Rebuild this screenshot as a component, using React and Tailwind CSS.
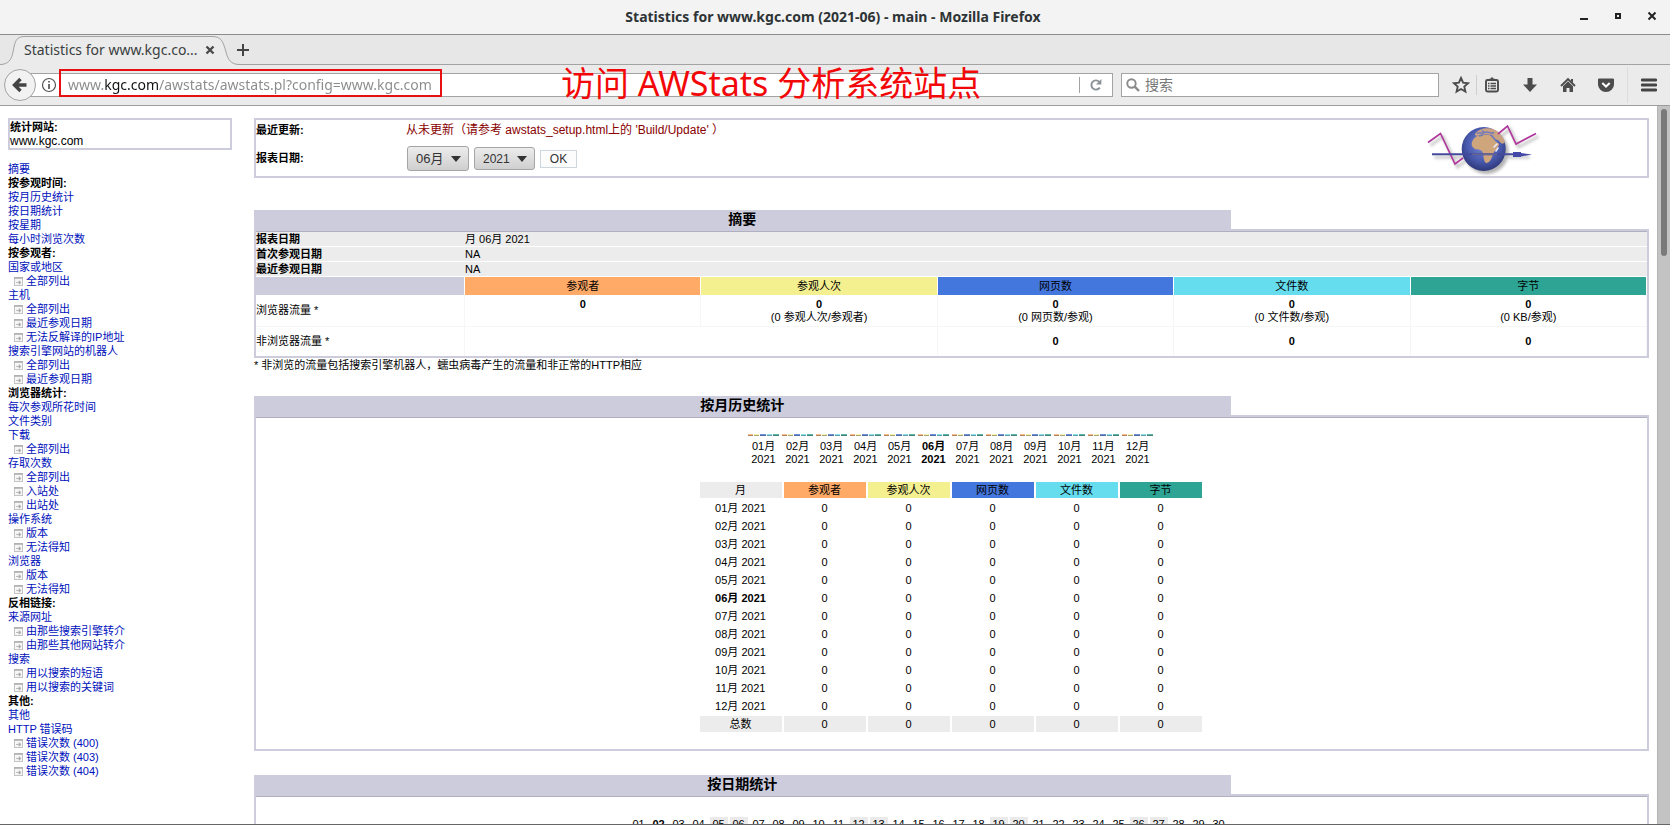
import React from "react";

const METRICS = [
  { name: "参观者", bg: "bg-[#ffaa66]", ratio: null },
  { name: "参观人次", bg: "bg-[#f4f090]", ratio: "(0 参观人次/参观者)" },
  { name: "网页数", bg: "bg-[#4477dd]", ratio: "(0 网页数/参观)" },
  { name: "文件数", bg: "bg-[#66ddee]", ratio: "(0 文件数/参观)" },
  { name: "字节", bg: "bg-[#2ea495]", ratio: "(0 KB/参观)" },
];

const MONTHS = ["01", "02", "03", "04", "05", "06", "07", "08", "09", "10", "11", "12"];
const DAYS = Array.from({ length: 30 }, (_, i) => i + 1);
const WEEKEND = [5, 6, 12, 13, 19, 20, 26, 27];

const MENU = [
  ["link", "摘要"],
  ["head", "按参观时间:"],
  ["link", "按月历史统计"],
  ["link", "按日期统计"],
  ["link", "按星期"],
  ["link", "每小时浏览次数"],
  ["head", "按参观者:"],
  ["link", "国家或地区"],
  ["sub", "全部列出"],
  ["link", "主机"],
  ["sub", "全部列出"],
  ["sub", "最近参观日期"],
  ["sub", "无法反解译的IP地址"],
  ["link", "搜索引擎网站的机器人"],
  ["sub", "全部列出"],
  ["sub", "最近参观日期"],
  ["head", "浏览器统计:"],
  ["link", "每次参观所花时间"],
  ["link", "文件类别"],
  ["link", "下载"],
  ["sub", "全部列出"],
  ["link", "存取次数"],
  ["sub", "全部列出"],
  ["sub", "入站处"],
  ["sub", "出站处"],
  ["link", "操作系统"],
  ["sub", "版本"],
  ["sub", "无法得知"],
  ["link", "浏览器"],
  ["sub", "版本"],
  ["sub", "无法得知"],
  ["head", "反相链接:"],
  ["link", "来源网址"],
  ["sub", "由那些搜索引擎转介"],
  ["sub", "由那些其他网站转介"],
  ["link", "搜索"],
  ["sub", "用以搜索的短语"],
  ["sub", "用以搜索的关键词"],
  ["head", "其他:"],
  ["link", "其他"],
  ["link", "HTTP 错误码"],
  ["sub", "错误次数 (400)"],
  ["sub", "错误次数 (403)"],
  ["sub", "错误次数 (404)"],
];

function TitleBar() {
  return (
    <header className="flex h-[35px] shrink-0 items-center border-b border-[#8c8c88] bg-[#f3f3f3] text-[#2e3436]">
      <div className="w-[100px]" />
      <h1 className="flex-1 text-center font-['Noto_Sans','Noto_Sans_CJK_SC',sans-serif] text-[14px] leading-8 font-bold">
        Statistics for www.kgc.com (2021-06) - main - Mozilla Firefox
      </h1>
      <div className="flex w-[104px] shrink-0 items-center justify-end pr-px pb-0.5">
        <button aria-label="最小化" className="flex w-[34px] justify-center">
          <svg width="10" height="10" viewBox="0 0 10 10"><path d="M1 8h8" stroke="#222" strokeWidth="2" /></svg>
        </button>
        <button aria-label="最大化" className="flex w-[34px] justify-center">
          <svg width="10" height="10" viewBox="0 0 10 10"><rect x="3" y="3" width="4" height="4" fill="none" stroke="#222" strokeWidth="2" /></svg>
        </button>
        <button aria-label="关闭" className="flex w-[34px] justify-center">
          <svg width="10" height="10" viewBox="0 0 10 10"><path d="M1.500 1.500l7 7M8.500 1.500l-7 7" stroke="#222" strokeWidth="2" /></svg>
        </button>
      </div>
    </header>
  );
}

function TabStrip() {
  return (
    <div className="relative flex h-[30px] shrink-0 items-center border-b border-[#a3a3a3] bg-[#e7e7e7] font-['Noto_Sans','Noto_Sans_CJK_SC',sans-serif] text-[#3a3f41]">
      <svg className="absolute top-0 left-0" width="240" height="30" viewBox="0 0 240 30">
        <path
          d="M0 30V29.500C8 29.500 11.500 25 13 17C15 6 16 1.500 25 1.500H212C221 1.500 223 6 226 17C228 25 231 29.500 238 29.500V30Z"
          fill="#ebebeb"
        />
        <path
          d="M0 29.500C8 29.500 11.500 25 13 17C15 6 16 1.500 25 1.500H212C221 1.500 223 6 226 17C228 25 231 29.500 240 29.500"
          fill="none"
          stroke="#a3a3a3"
        />
      </svg>
      <div className="relative flex items-center pl-6">
        <span className="w-[180px] text-[14px] leading-6 whitespace-nowrap">Statistics for www.kgc.co...</span>
        <button aria-label="关闭标签页">
          <svg width="12" height="12" viewBox="0 0 12 12"><path d="M2.500 2.500l7 7M9.500 2.500l-7 7" stroke="#4a4a4a" strokeWidth="2.400" /></svg>
        </button>
        <button aria-label="新建标签页" className="ml-5">
          <svg width="14" height="14" viewBox="0 0 14 14"><path d="M7 1v12M1 7h12" stroke="#444" strokeWidth="2" /></svg>
        </button>
      </div>
    </div>
  );
}

function Toolbar() {
  return (
    <div className="flex h-[41px] shrink-0 items-center border-b border-[#a09c9e] bg-[#ebebeb] pl-1 font-['Noto_Sans','Noto_Sans_CJK_SC',sans-serif]">
      <button aria-label="后退" className="z-10 flex size-8 shrink-0 items-center justify-center rounded-full border border-[#a3a3a3] bg-[#f2f2f2]">
        <svg width="16" height="16" viewBox="0 0 16 16"><path d="M8.500 2L2.500 8l6 6M3 8h11.500" fill="none" stroke="#444" strokeWidth="3.400" /></svg>
      </button>
      <div className="-ml-2 flex h-6 min-w-0 flex-1 items-center border border-[#a3a3a3] bg-white pl-3">
        <svg className="shrink-0" width="16" height="16" viewBox="0 0 16 16">
          <circle cx="8" cy="8" r="6.500" fill="none" stroke="#555" strokeWidth="1.200" />
          <path d="M8 7v5M8 4v1.600" stroke="#555" strokeWidth="1.700" />
        </svg>
        <input
          aria-label="地址"
          defaultValue="www.kgc.com/awstats/awstats.pl?config=www.kgc.com"
          className="ml-[11px] h-[22px] min-w-0 flex-1 bg-[linear-gradient(to_right,#8a8a8a_37px,#111_37px,#111_90px,#8a8a8a_90px)] bg-clip-text text-[14px] leading-[22px] text-transparent outline-none"
        />
        <span className="h-4 w-px bg-[#a3a3a3]" />
        <button aria-label="刷新" className="flex w-8 justify-center">
          <svg width="14" height="14" viewBox="0 0 14 14">
            <path d="M10.800 9.600A4.600 4.600 0 1 1 10.300 3.800" fill="none" stroke="#8b9296" strokeWidth="1.900" />
            <path d="M12.400 1v5.400H7Z" fill="#8b9296" />
          </svg>
        </button>
      </div>
      <label className="ml-2 flex h-6 w-[318px] shrink-0 items-center border border-[#a3a3a3] bg-white pl-1">
        <svg width="14" height="14" viewBox="0 0 14 14">
          <circle cx="5.500" cy="5.500" r="4.200" fill="none" stroke="#8a8a8a" strokeWidth="1.900" />
          <path d="M8.700 8.700l4.300 4.300" stroke="#8a8a8a" strokeWidth="2.400" />
        </svg>
        <input aria-label="搜索" placeholder="搜索" className="ml-[5px] h-[22px] min-w-0 flex-1 text-[14px] leading-[22px] outline-none placeholder:text-[#777]" />
      </label>
      <button aria-label="收藏" className="ml-[7px] flex w-[30px] shrink-0 justify-center">
        <svg width="18" height="18" viewBox="0 0 18 18"><path d="M9 2l2.100 4.700 5 .5-3.800 3.400 1.100 5L9 13l-4.400 2.600 1.100-5L1.900 7.200l5-.5Z" fill="none" stroke="#4c4c4c" strokeWidth="1.900" /></svg>
      </button>
      <span className="h-5 w-px shrink-0 bg-[#cfcfcf]" />
      <button aria-label="书签" className="flex w-[34px] shrink-0 justify-center pr-1">
        <svg width="16" height="16" viewBox="0 0 16 16">
          <path d="M5 3V1.800h1.500L7 .5h2l.5 1.300H11V3" fill="#4c4c4c" />
          <rect x="2" y="3" width="12" height="11.500" rx="1.500" fill="none" stroke="#4c4c4c" strokeWidth="1.900" />
          <path d="M4 6.500h1.500M6.500 6.500H12M4 9h1.500M6.500 9H12M4 11.500h1.500M6.500 11.500H12" stroke="#4c4c4c" strokeWidth="1.300" />
        </svg>
      </button>
      <button aria-label="下载" className="flex w-[38px] shrink-0 justify-center">
        <svg width="16" height="16" viewBox="0 0 16 16"><path d="M5.500 1h5v6.500H15L8 15 1 7.500h4.500Z" fill="#4c4c4c" /></svg>
      </button>
      <button aria-label="主页" className="flex w-[38px] shrink-0 justify-center">
        <svg width="16" height="16" viewBox="0 0 16 16">
          <path d="M1 9l7-7 7 7" fill="none" stroke="#4c4c4c" strokeWidth="1.900" />
          <path d="M3 9.300l5-5 5 5V15H9.500v-4h-3v4H3ZM11 2h2v4l-2-2Z" fill="#4c4c4c" />
        </svg>
      </button>
      <button aria-label="Pocket" className="flex w-[38px] shrink-0 justify-center">
        <svg width="16" height="16" viewBox="0 0 16 16">
          <path d="M1.500 1.500h13A1.300 1.300 0 0 1 16 3v4.500a8 7.500 0 0 1-16 0V3a1.300 1.300 0 0 1 1.500-1.500Z" fill="#4c4c4c" />
          <path d="M4.300 6L8 9.500 11.700 6" fill="none" stroke="#fff" strokeWidth="2" />
        </svg>
      </button>
      <span className="ml-0.5 h-9 w-px shrink-0 bg-[#dcdcdc]" />
      <button aria-label="菜单" className="flex w-[42px] shrink-0 justify-center">
        <svg width="16" height="14" viewBox="0 0 16 14"><path d="M1 2h14M1 7h14M1 12h14" stroke="#444" strokeWidth="2.800" strokeLinecap="round" /></svg>
      </button>
    </div>
  );
}

function PageIcon() {
  return (
    <svg className="shrink-0" width="9" height="9" viewBox="0 0 9 9">
      <rect x="0.500" y="0.500" width="8" height="8" fill="#f6f6f6" stroke="#c4c4c4" />
      <path d="M0 1h9" stroke="#aaa" strokeWidth="1.400" />
      <path d="M2 5.500h3M5 3.800v3.400L7 5.500Z" fill="#a0a0a0" stroke="#b0b0b0" strokeWidth="0.800" />
    </svg>
  );
}

function Sidebar() {
  return (
    <aside className="w-[224px] shrink-0">
      <div className="h-8 border-2 border-[#ccccdd]">
        <p className="text-[11px] leading-[14px] font-bold">统计网站:</p>
        <p className="text-[12px] leading-[14px]">www.kgc.com</p>
      </div>
      <nav className="mt-3">
        <ul>
          {MENU.map(([kind, text], i) => (
            <li key={i} className="flex h-[14px] items-center leading-[14px] whitespace-nowrap">
              {kind === "head" && <b>{text}</b>}
              {kind === "link" && <a href="#top" className="text-[#0011bb]">{text}</a>}
              {kind === "sub" && (
                <span className="flex items-center gap-[3px] pl-1.5">
                  <PageIcon />
                  <a href="#top" className="text-[#0011bb]">{text}</a>
                </span>
              )}
            </li>
          ))}
        </ul>
      </nav>
    </aside>
  );
}

function Logo() {
  return (
    <svg width="115" height="56" viewBox="0 0 115 56" role="img" aria-label="AWStats">
      <defs>
        <radialGradient id="sea" cx="0.5" cy="0.4" r="0.62">
          <stop offset="0" stopColor="#7d8fd6" />
          <stop offset="0.600" stopColor="#4a5bb0" />
          <stop offset="1" stopColor="#2b3474" />
        </radialGradient>
        <filter id="soft" x="-20%" y="-20%" width="150%" height="150%">
          <feGaussianBlur stdDeviation="1.500" />
        </filter>
      </defs>
      <g filter="url(#soft)" opacity="0.450" transform="translate(2.500 3)">
        <path d="M3 22.500L15.500 13.500L30 44L38 38M73 14L82.500 6L91 24L111 13.500" fill="none" stroke="#777" strokeWidth="2.500" />
        <circle cx="59" cy="29" r="22" fill="#555" />
        <path d="M7 34.300h95" stroke="#777" strokeWidth="2.500" />
      </g>
      <path d="M3 22.500L15.500 13.500L30 44L38 38" fill="none" stroke="#b0389c" strokeWidth="1.700" />
      <circle cx="58.700" cy="29" r="22" fill="url(#sea)" />
      <path d="M47 22C49 17 53 14.500 59 15C64 14 68 16 70 20C71 23 75 23 74 25C72 29 69 31 68 34C67 38 65 43 61 43C58 41 59 35 57.500 32C56 29 53 30 50 29C47 27 46 25 47 22Z" fill="#cfa57c" />
      <path d="M50 14C53 9 60 7.500 66 8.500C73 10 78 16 80 22C77 26 75 22 73 20C71 20 69 18 67 15C62 14 59 14 56 15C53 16 49 16 50 14Z" fill="#c9a284" />
      <path d="M52 13.500c3-2 5 1 8-1s5 2 9 0M57 10.500l3 2.500M66 15l6 7M54 16l4-1" fill="none" stroke="#6d78bd" strokeWidth="1.400" />
      <path d="M69 27l3-3M71 31l2-3" stroke="#e9ecff" strokeWidth="1.600" strokeLinecap="round" />
      <path d="M7 34.300H92" stroke="#444a9c" strokeWidth="2" />
      <path d="M47 34.300H72" stroke="#6a6694" strokeWidth="1.400" />
      <path d="M88 32h8v1l11 1.500L96 36.500v.500h-8Z" fill="#4449a8" />
      <path d="M73 14L82.500 6L91 24L111 13.500" fill="none" stroke="#b0389c" strokeWidth="1.700" />
    </svg>
  );
}

function Picker({ label, value, tall }) {
  return (
    <label className={"relative flex rounded-[3px] border border-[#a5a5a5] bg-linear-to-b from-[#ececec] to-[#cfcfcf] " + (tall ? "h-[25px] w-[62px]" : "h-[23px] w-[61px]")}>
      <select aria-label={label} defaultValue={value} className={"w-full appearance-none bg-transparent pl-2 text-[#333] outline-none " + (tall ? "text-[13px]" : "text-[12px]")}>
        <option>{value}</option>
      </select>
      <svg className="pointer-events-none absolute inset-y-0 right-[7px] my-auto" width="10" height="6" viewBox="0 0 10 6"><path d="M0 0h10L5 6Z" fill="#333" /></svg>
    </label>
  );
}

function UpdateForm() {
  return (
    <form className="flex h-[60px] items-start justify-between border-2 border-[#ccccdd] pr-[107px]">
      <div className="grid grid-cols-[150px_auto] items-center gap-y-1.5">
        <b className="leading-5">最近更新:</b>
        <p className="text-[12px] leading-5 text-[#880000]">从未更新（请参考 awstats_setup.html上的 'Build/Update' ）</p>
        <b className="leading-[25px]">报表日期:</b>
        <div className="flex items-center gap-[5px] pl-px">
          <Picker label="月" value="06月" tall />
          <Picker label="年" value="2021" />
          <button type="button" className="h-[18px] w-[37px] border border-[#ccd7e0] bg-[#fcfcfc] text-[12px] leading-4 text-[#333]">OK</button>
        </div>
      </div>
      <Logo />
    </form>
  );
}

function Section({ title, children }) {
  return (
    <section>
      <h2 className="h-[19px] w-[70%] bg-[#ccccdd] text-center text-[14px] leading-[19px] font-bold">{title}</h2>
      <div className="border-2 border-[#ccccdd]">
        <div className="border-t border-[#b0b0c0]">{children}</div>
      </div>
    </section>
  );
}

function Summary() {
  return (
    <table className="w-full table-fixed border-separate border-spacing-0">
      <colgroup>
        <col className="w-[209px]" />
        <col span={5} />
      </colgroup>
      <tbody>
        {[["报表日期", "月 06月 2021"], ["首次参观日期", "NA"], ["最近参观日期", "NA"]].map(([k, v]) => (
          <tr key={k} className="h-[15px] bg-[#ececec] leading-[14px]">
            <th scope="row" className="border-b border-white p-0 text-left">{k}</th>
            <td colSpan={5} className="border-b border-white p-0">{v}</td>
          </tr>
        ))}
        <tr className="h-[18px] leading-[18px]">
          <td className="border-r border-white bg-[#ccccdd] p-0" />
          {METRICS.map((m) => (
            <th key={m.name} scope="col" className={"border-r border-white p-0 text-center font-normal " + m.bg}>{m.name}</th>
          ))}
        </tr>
        <tr className="h-8 leading-[13px]">
          <th scope="row" className="border-r border-b border-[#f6f6f6] p-0 text-left font-normal">浏览器流量 *</th>
          {METRICS.map((m) => (
            <td key={m.name} className="border-r border-b border-[#f6f6f6] p-0 pt-[3px] text-center align-top">
              <b className="block">0</b>
              {m.ratio}
            </td>
          ))}
        </tr>
        <tr className="h-[29px] leading-[13px]">
          <th scope="row" className="border-r border-[#f6f6f6] p-0 text-left font-normal">非浏览器流量 *</th>
          <td colSpan={2} className="border-r border-[#f6f6f6] p-0" />
          {METRICS.slice(2).map((m) => (
            <td key={m.name} className="border-r border-[#f6f6f6] p-0 text-center font-bold">0</td>
          ))}
        </tr>
      </tbody>
    </table>
  );
}

function MonthBars() {
  return (
    <div className="flex justify-center gap-0.5">
      {MONTHS.map((m) => (
        <div key={m} className={"w-8 text-center leading-[13px] " + (m === "06" ? "font-bold" : "")}>
          <div className="mb-1 flex h-0.5 gap-px pr-px opacity-80">
            {METRICS.map((x) => (
              <span key={x.name} className={"flex-1 border-b border-black/40 " + x.bg} />
            ))}
          </div>
          {m}月<br />2021
        </div>
      ))}
    </div>
  );
}

function MonthTable() {
  const cell = "h-4 w-[82px] p-0 text-center leading-4";
  return (
    <table className="mx-auto border-separate border-spacing-x-0.5 border-spacing-y-0.5">
      <thead>
        <tr>
          <th scope="col" className={cell + " bg-[#ececec] font-normal"}>月</th>
          {METRICS.map((m) => (
            <th key={m.name} scope="col" className={cell + " font-normal " + m.bg}>{m.name}</th>
          ))}
        </tr>
      </thead>
      <tbody>
        {MONTHS.map((m) => (
          <tr key={m}>
            <th scope="row" className={cell + (m === "06" ? " font-bold" : " font-normal")}>{m}月 2021</th>
            {METRICS.map((x) => <td key={x.name} className={cell}>0</td>)}
          </tr>
        ))}
      </tbody>
      <tfoot>
        <tr className="bg-[#ececec]">
          <th scope="row" className={cell + " font-normal"}>总数</th>
          {METRICS.map((x) => <td key={x.name} className={cell}>0</td>)}
        </tr>
      </tfoot>
    </table>
  );
}

function DayRow() {
  return (
    <div className="flex justify-center gap-0.5 pt-5 pr-[46px]">
      {DAYS.map((d) => (
        <span
          key={d}
          className={"w-[18px] text-center leading-[14px] " + (WEEKEND.includes(d) ? "bg-[#eaeaea] " : "") + (d === 2 ? "font-bold" : "")}
        >
          {String(d).padStart(2, "0")}
        </span>
      ))}
    </div>
  );
}

export default function App() {
  return (
    <div className="relative flex h-screen flex-col overflow-hidden border-b border-[#666] bg-white font-['Liberation_Sans','Noto_Sans_CJK_SC',sans-serif] text-[11px] text-black">
      <TitleBar />
      <TabStrip />
      <Toolbar />
      <div className="flex min-h-0 flex-1">
        <div id="top" className="flex min-w-0 flex-1 gap-[22px] overflow-hidden pt-3 pr-2 pl-2">
          <Sidebar />
          <main className="min-w-0 flex-1">
            <UpdateForm />
            <div className="mt-8">
              <Section title="摘要">
                <Summary />
              </Section>
              <p className="mb-6 leading-[14px]">* 非浏览的流量包括搜索引擎机器人，蠕虫病毒产生的流量和非正常的HTTP相应</p>
            </div>
            <Section title="按月历史统计">
              <div className="pt-4 pr-0.5 pb-[15px]">
                <MonthBars />
                <div className="mt-3.5">
                  <MonthTable />
                </div>
              </div>
            </Section>
            <div className="mt-6">
              <Section title="按日期统计">
                <DayRow />
              </Section>
            </div>
          </main>
        </div>
        <div className="w-[13px] shrink-0 border-l border-[#b4b4b4] bg-[#c3c3c3] pt-[3px] pl-[3px]">
          <div className="h-[147px] w-1.5 rounded-full bg-[#7a7a7a]" />
        </div>
      </div>
      <div className="pointer-events-none absolute top-[69px] left-[59px] z-20 h-[28px] w-[383px] border-2 border-[#e60f12]" />
      <p className="pointer-events-none absolute top-[60px] left-[561px] z-20 font-['Noto_Sans','Noto_Sans_CJK_SC',sans-serif] text-[34px] leading-[46px] whitespace-nowrap text-[#f20808]">
        访问 AWStats 分析系统站点
      </p>
    </div>
  );
}
